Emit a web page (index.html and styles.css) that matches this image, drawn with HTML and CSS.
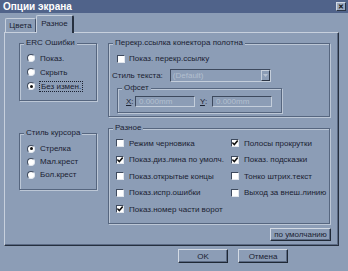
FILE: index.html
```html
<!DOCTYPE html>
<html lang="ru">
<head>
  <meta charset="UTF-8" />
  <title>Опции экрана</title>
  <link rel="stylesheet" href="styles.css">
</head>
<body>
  <div class="window">
    <div class="titlebar">
      <span class="title">Опции экрана</span>
      <span class="close-btn">✕</span>
    </div>

    <div class="tabs">
      <span class="tab">Цвета</span>
      <span class="tab active">Разное</span>
    </div>

    <div class="panel">
      <div class="col-left">
        <div class="group erc">
          <span class="legend">ERC Ошибки</span>
          <div class="radio-list">
            <div class="radio-row"><span class="radio"></span>Показ.</div>
            <div class="radio-row"><span class="radio"></span>Скрыть</div>
            <div class="radio-row"><span class="radio"><span class="dot"></span></span><span class="focus">Без измен.</span></div>
          </div>
        </div>

        <div class="group cursor">
          <span class="legend">Стиль курсора</span>
          <div class="radio-list tight">
            <div class="radio-row"><span class="radio"><span class="dot"></span></span>Стрелка</div>
            <div class="radio-row"><span class="radio"></span>Мал.крест</div>
            <div class="radio-row"><span class="radio"></span>Бол.крест</div>
          </div>
        </div>
      </div>

      <div class="col-right">
        <div class="group link">
          <span class="legend">Перекр.ссылка конектора полотна</span>
          <div class="check-row first"><span class="check"></span>Показ. перекр.ссылку</div>
          <div class="style-row">
            <span>Стиль текста:</span>
            <span class="select">
              <span class="select-text">(Default)</span>
              <span class="select-arrow">
                <svg width="5" height="3" viewBox="0 0 5 3"><path d="M0 0h5L2.5 3z" fill="#b7c2d1"/></svg>
              </span>
            </span>
          </div>
          <div class="group offset">
            <span class="legend">Офсет</span>
            <div class="offset-row">
              <span class="axis"><u>X</u>:</span>
              <span class="field">0.000mm</span>
              <span class="axis y"><u>Y</u>:</span>
              <span class="field">0.000mm</span>
            </div>
          </div>
        </div>

        <div class="group misc">
          <span class="legend">Разное</span>
          <div class="check-grid">
            <div class="check-row"><span class="check"></span>Режим черновика</div>
            <div class="check-row"><span class="check on"><svg width="6" height="6" viewBox="0 0 6 6"><path d="M0.3 2.6l2 2 3.4-4" fill="none" stroke="#111" stroke-width="1.5"/></svg></span>Полосы прокрутки</div>
            <div class="check-row"><span class="check on"><svg width="6" height="6" viewBox="0 0 6 6"><path d="M0.3 2.6l2 2 3.4-4" fill="none" stroke="#111" stroke-width="1.5"/></svg></span>Показ.диз.лина по умолч.</div>
            <div class="check-row"><span class="check on"><svg width="6" height="6" viewBox="0 0 6 6"><path d="M0.3 2.6l2 2 3.4-4" fill="none" stroke="#111" stroke-width="1.5"/></svg></span>Показ. подсказки</div>
            <div class="check-row"><span class="check"></span>Показ.открытые концы</div>
            <div class="check-row"><span class="check"></span>Тонко штрих.текст</div>
            <div class="check-row"><span class="check"></span>Показ.испр.ошибки</div>
            <div class="check-row"><span class="check"></span>Выход за внеш.линию</div>
            <div class="check-row"><span class="check on"><svg width="6" height="6" viewBox="0 0 6 6"><path d="M0.3 2.6l2 2 3.4-4" fill="none" stroke="#111" stroke-width="1.5"/></svg></span>Показ.номер части ворот</div>
          </div>
        </div>

        <span class="btn default-btn">по умолчанию</span>
      </div>
    </div>

    <div class="dialog-buttons">
      <span class="btn ok-btn">OK</span>
      <span class="btn">Отмена</span>
    </div>
  </div>
</body>
</html>
```

FILE: styles.css
```css
body {
  margin: 0;
  padding: 0;
  font-family: 'Liberation Sans', Arial, sans-serif;
  font-size: 8px;
  color: #1b2232;
}

.window {
  width: 348px;
  height: 271px;
  background: #8c9db6;
  overflow: hidden;
}

.titlebar {
  display: flex;
  align-items: center;
  justify-content: space-between;
  height: 13px;
  padding: 0 2px 0 3px;
  background: #50638a;
  box-sizing: border-box;
}

.title {
  color: #fff;
  font-weight: bold;
  font-size: 10px;
}

.close-btn {
  display: flex;
  align-items: center;
  justify-content: center;
  width: 10px;
  height: 9px;
  box-sizing: border-box;
  background: #9aa9bf;
  border: 1px solid;
  border-color: #d3dae4 #2b3545 #2b3545 #d3dae4;
  font-size: 7px;
  font-weight: bold;
  color: #111;
}

.tabs {
  display: flex;
  align-items: flex-end;
  height: 19px;
  padding-left: 5px;
  box-sizing: border-box;
}

.tab {
  display: flex;
  align-items: center;
  justify-content: center;
  width: 31px;
  height: 14px;
  box-sizing: border-box;
  border-top: 1px solid #c7d0dd;
  border-left: 1px solid #c7d0dd;
  border-right: 1px solid #45526a;
  border-radius: 2px 2px 0 0;
}

.tab.active {
  position: relative;
  z-index: 1;
  width: 38px;
  height: 18px;
  margin-bottom: -1px;
  background: #8c9db6;
  border-right: 2px solid #26303f;
  padding-bottom: 2px;
}

.panel {
  display: flex;
  gap: 11px;
  width: 335px;
  height: 214px;
  margin-left: 4px;
  padding: 10px 0 0 14px;
  box-sizing: border-box;
  border: 1px solid;
  border-color: #c7d0dd #26303f #26303f #c7d0dd;
  box-shadow: inset -1px -1px 0 #5b6a84;
}

.col-left {
  display: flex;
  flex-direction: column;
  width: 78px;
}

.col-right {
  display: flex;
  flex-direction: column;
  width: 222px;
}

.group {
  border: 1px solid #56667f;
  box-shadow: inset 1px 1px 0 #bcc7d6, 1px 1px 0 #bcc7d6;
  box-sizing: border-box;
}

.legend {
  display: block;
  width: fit-content;
  height: 10px;
  line-height: 10px;
  margin: -6px 0 0 4px;
  padding: 0 2px;
  background: #8c9db6;
}

.erc {
  height: 58px;
}

.cursor {
  height: 57px;
  margin-top: 32px;
}

.radio-list {
  padding: 3px 0 0 7px;
}

.radio-list.tight {
  padding-top: 4px;
}

.radio-row {
  display: flex;
  align-items: center;
  gap: 5px;
  height: 14px;
}

.tight .radio-row {
  height: 13px;
}

.radio {
  display: flex;
  align-items: center;
  justify-content: center;
  width: 8px;
  height: 8px;
  box-sizing: border-box;
  border-radius: 50%;
  background: #fff;
  border: 1px solid;
  border-color: #3d495d #e2e7ee #e2e7ee #3d495d;
}

.dot {
  width: 3px;
  height: 3px;
  border-radius: 50%;
  background: #111;
}

.focus {
  outline: 1px dotted #1b2232;
  outline-offset: 0;
  padding: 0 1px;
}

.link {
  height: 74px;
}

.check-row {
  display: flex;
  align-items: center;
  gap: 5px;
  height: 13px;
  white-space: nowrap;
}

.check-row.first {
  margin: 4px 0 0 8px;
  gap: 4px;
}

.check {
  display: flex;
  align-items: center;
  justify-content: center;
  width: 8px;
  height: 8px;
  box-sizing: border-box;
  background: #fff;
  border: 1px solid;
  border-color: #3d495d #e2e7ee #e2e7ee #3d495d;
}

.style-row {
  display: flex;
  align-items: center;
  gap: 7px;
  height: 14px;
  margin: 3px 0 0 3px;
}

.select {
  display: flex;
  align-items: center;
  justify-content: space-between;
  width: 101px;
  height: 13px;
  box-sizing: border-box;
  padding-left: 2px;
  border: 1px solid;
  border-color: #3d495d #c4cedb #c4cedb #3d495d;
  color: #b3bfcf;
}

.select-arrow {
  display: flex;
  align-items: center;
  justify-content: center;
  width: 9px;
  height: 11px;
  box-sizing: border-box;
  border: 1px solid;
  border-color: #c7d0dd #2b3545 #2b3545 #c7d0dd;
}

.offset {
  width: 165px;
  height: 25px;
  margin: 6px 0 0 8px;
}

.offset-row {
  display: flex;
  align-items: center;
  height: 11px;
  margin: 3px 0 0 8px;
}

.axis {
  width: 9px;
}

.axis.y {
  margin-left: 5px;
  width: 12px;
}

.field {
  width: 60px;
  height: 11px;
  line-height: 9px;
  box-sizing: border-box;
  padding-left: 3px;
  border: 1px solid;
  border-color: #3d495d #c4cedb #c4cedb #3d495d;
  color: #b3bfcf;
}

.misc {
  height: 96px;
  margin-top: 11px;
}

.check-grid {
  display: grid;
  grid-template-columns: 115px 1fr;
  grid-auto-rows: 16.5px;
  margin: 2px 0 0 7px;
}

.check-grid .check-row {
  height: 16.5px;
}

.btn {
  display: flex;
  align-items: center;
  justify-content: center;
  height: 14px;
  box-sizing: border-box;
  border: 1px solid;
  border-color: #d3dae4 #1f2835 #1f2835 #d3dae4;
  box-shadow: inset -1px -1px 0 #5b6a84;
}

.default-btn {
  align-self: flex-end;
  width: 61px;
  height: 13px;
  margin: 4px -1px 0 0;
}

.dialog-buttons {
  display: flex;
  gap: 10px;
  padding: 3px 0 0 178px;
}

.dialog-buttons .btn {
  width: 50px;
}
```
